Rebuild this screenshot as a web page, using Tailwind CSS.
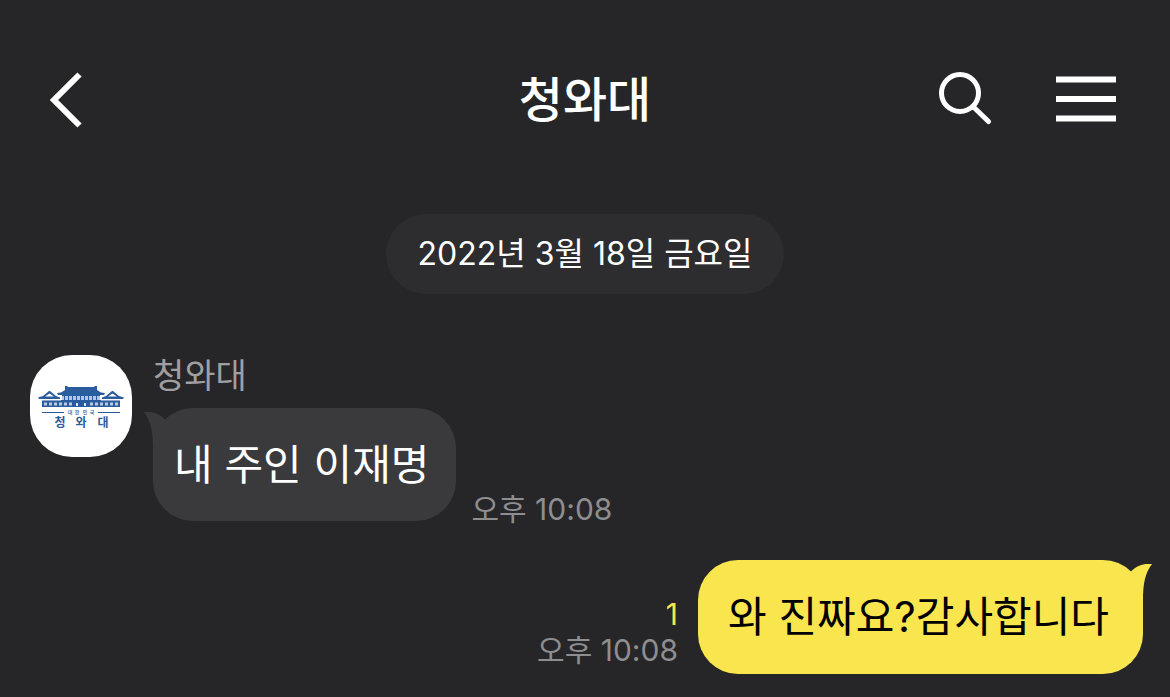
<!DOCTYPE html>
<html lang="ko">
<head>
    <meta charset="UTF-8">
    <meta name="viewport" content="width=device-width, initial-scale=1.0">
    <title>청와대</title>
    <script src="https://cdn.jsdelivr.net/npm/@tailwindcss/browser@4"></script>
</head>
<body class="min-h-screen bg-[#262628] text-white font-['Inter','Noto_Sans_CJK_KR',sans-serif]">

    <!-- Header -->
    <header class="grid grid-cols-[1fr_auto_1fr] items-center px-12 pt-16">
        <button type="button" aria-label="뒤로" class="justify-self-start">
            <svg class="block w-9 h-[72px]" viewBox="0 0 36 72" fill="none" stroke="#fff" stroke-width="6">
                <path d="M31.5 10.5 6 36l25.5 25.5" />
            </svg>
        </button>
        <h1 class="text-[48px] leading-[72px] font-medium">청와대</h1>
        <div class="flex items-center gap-16 justify-self-end pr-1.5">
            <button type="button" aria-label="검색">
                <svg class="block w-[54px] h-[72px]" viewBox="0 0 54 72" fill="none" stroke="#fff" stroke-width="5" stroke-linecap="round">
                    <circle cx="22" cy="29" r="18.5" />
                    <path d="M36 43.5 50.5 57.5" />
                </svg>
            </button>
            <button type="button" aria-label="메뉴">
                <svg class="block w-[60px] h-[72px]" viewBox="0 0 60 72" fill="#fff">
                    <path d="M0 12.5h60v6H0zM0 32h60v6H0zM0 51.5h60v6H0z" />
                </svg>
            </button>
        </div>
    </header>

    <main class="pt-[78px]">
        <!-- Date -->
        <div class="flex justify-center">
            <time datetime="2022-03-18" class="rounded-full bg-[#2d2d2f] px-8 text-[32px] leading-[80px]">2022년 3월 18일 금요일</time>
        </div>

        <!-- Received -->
        <section class="mt-[60px] flex items-start gap-[21px] pl-[30px]">
            <svg class="mt-px size-[102px] shrink-0" viewBox="0 0 102 102" role="img" aria-label="청와대 프로필">
                <rect width="102" height="102" rx="42" fill="#fff" />
                <g fill="#2b5c9e">
                    <!-- main roof -->
                    <path d="M35 31h2l1 1h26l1-1h2v4l4 2.5 4 .5-1 2H28l-1-2 4-.5 4-2.5z" />
                    <path d="M32 40h38v1H32zM31 45h40v1H31z" />
                    <path d="M32 41h38v4H32z" fill="#b4c7e0" />
                    <path d="M34 41h1v4h-1zM38 41h1v4h-1zM42 41h1v4h-1zM46 41h1v4h-1zM50 41h1v4h-1zM54 41h1v4h-1zM58 41h1v4h-1zM62 41h1v4h-1zM66 41h1v4h-1z" />
                    <!-- side roofs -->
                    <path d="M8 42.5l5-1.5 6-5h1l6 5 4 1.5v1.5H9zM15 41.5h9l-4.5-3z" fill-rule="evenodd" />
                    <path d="M94 42.5l-5-1.5-6-5h-1l-6 5-4 1.5v1.5h21zM87 41.5h-9l4.5-3z" fill-rule="evenodd" />
                    <!-- lower wing -->
                    <path d="M12 46h78v6H12z" />
                    <path d="M12 45h19v1H12zM71 45h19v1H71z" fill="#8ea9cf" />
                    <path d="M14 47.5h3v3h-3zM19 47.5h3v3h-3zM24 47.5h3v3h-3zM29 47.5h3v3h-3zM34 47.5h3v3h-3zM39 47.5h3v3h-3zM60 47.5h3v3h-3zM65 47.5h3v3h-3zM70 47.5h3v3h-3zM75 47.5h3v3h-3zM80 47.5h3v3h-3zM85 47.5h3v3h-3z" fill="#b9cbe2" />
                    <path d="M46 48h2v3h-2zM54 48h2v3h-2z" fill="#dbe5f1" />
                    <path d="M12 57h22v1H12zM68 57h22v1H68z" />
                </g>
                <g fill="#2b5c9e" font-family="'Noto Sans CJK KR', sans-serif" text-anchor="middle">
                    <g font-size="5" font-weight="500">
                        <text x="40" y="59">대</text>
                        <text x="47" y="59">한</text>
                        <text x="55" y="59">민</text>
                        <text x="62" y="59">국</text>
                    </g>
                    <g font-size="12" font-weight="700">
                        <text x="30" y="72">청</text>
                        <text x="51" y="72">와</text>
                        <text x="73" y="72">대</text>
                    </g>
                </g>
            </svg>
            <div>
                <h2 class="text-[34px] leading-[44px] text-[#a0a0a2]">청와대</h2>
                <div class="mt-2.5 flex items-end gap-[15px]">
                    <div class="relative rounded-[40px] bg-[#3a3a3c] pl-[21px] pr-[27px]">
                        <svg class="absolute -left-[9px] top-1 w-[23px] h-9" viewBox="0 0 23 36" fill="#3a3a3c">
                            <path d="M0 0C9-1 16 2 21 7.5L23 24 9 36C9 20 7 9 0 0Z" />
                        </svg>
                        <p class="relative text-[42px] leading-[113px]">내 주인 이재명</p>
                    </div>
                    <time class="text-[30px] leading-6 text-[#8e8e91]">오후 10:08</time>
                </div>
            </div>
        </section>

        <!-- Sent -->
        <section class="mt-[39px] flex items-end justify-end gap-5 pr-[27px]">
            <div class="flex flex-col items-end pb-1.5 text-[30px] leading-[36px]">
                <span class="text-[#f9e54e]">1</span>
                <time class="text-[#8e8e91]">오후 10:08</time>
            </div>
            <div class="relative rounded-[40px] bg-[#f9e54e] pl-[30px] pr-[34px] text-black">
                <svg class="absolute -right-[9px] top-1 w-[23px] h-9" viewBox="0 0 23 36" fill="#f9e54e">
                    <path d="M23 0C14-1 7 2 2 7.5L0 24 14 36C14 20 16 9 23 0Z" />
                </svg>
                <p class="relative text-[42px] leading-[114px]">와 진짜요?감사합니다</p>
            </div>
        </section>
    </main>
</body>
</html>
